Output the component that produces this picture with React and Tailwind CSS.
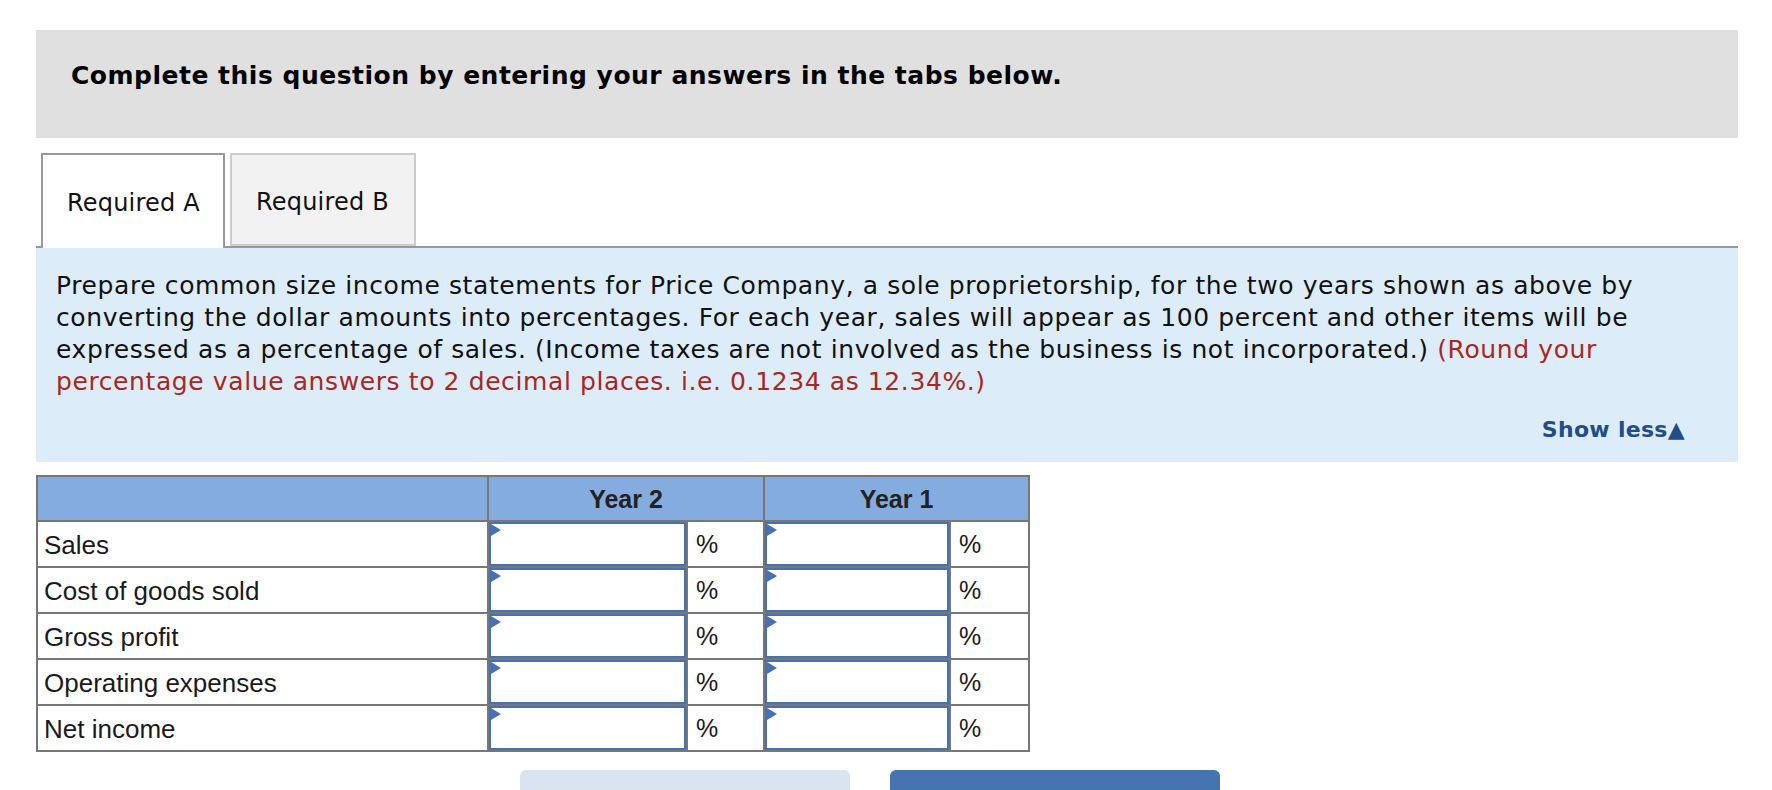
import React from "react";

const rows = [
  "Sales",
  "Cost of goods sold",
  "Gross profit",
  "Operating expenses",
  "Net income",
];

const AnswerInput = () => (
  <div className="relative h-full w-full bg-white border-2 border-[#4672b4]">
    <span className="absolute left-0 top-0 h-0 w-0 border-y-[6.5px] border-y-transparent border-l-[10px] border-l-[#4672b4]" />
    <input
      type="text"
      className="h-full w-full bg-transparent px-2 outline-none"
      style={{ fontFamily: "'Liberation Sans', Arial, sans-serif" }}
    />
  </div>
);

export default function App() {
  return (
    <div className="min-h-screen bg-white pt-[30px] px-[36px] w-[1774px]">
      <div className="w-[1702px]">
        {/* Instruction banner */}
        <div className="h-[108px] bg-[#e0e0e0] pl-[35px] pt-[31px] font-['DejaVu_Sans',Verdana,sans-serif]">
          <h2 className="text-[25px] leading-[30px] font-bold tracking-[0.5px] text-black">
            Complete this question by entering your answers in the tabs below.
          </h2>
        </div>

        {/* Tabs */}
        <div className="mt-[15px] flex items-end gap-[5px] pl-[5px] h-[95px] border-b-2 border-[#999999] font-['DejaVu_Sans',Verdana,sans-serif] text-[24px] tracking-[0.2px] text-[#111]">
          <div className="-mb-[2px] flex h-[95px] w-[184px] items-center border-2 border-b-0 border-[#999999] bg-white pl-[24px] pt-[3px]">
            Required A
          </div>
          <div className="flex h-[93px] w-[186px] items-center border-2 border-[#cccccc] bg-[#f2f2f2] pl-[24px] pt-[4px]">
            Required B
          </div>
        </div>

        {/* Question text */}
        <div className="h-[214px] bg-[#ddecf9] pl-[20px] pr-[53px] pt-[22px] font-['DejaVu_Sans',Verdana,sans-serif]">
          <p className="text-[25px] leading-[32px] tracking-[0.6px] text-[#111]">
            Prepare common size income statements for Price Company, a sole
            proprietorship, for the two years shown as above by converting the
            dollar amounts into percentages. For each year, sales will appear as
            100 percent and other items will be expressed as a percentage of
            sales. (Income taxes are not involved as the business is not
            incorporated.){" "}
            <span className="text-[#a8281f]">
              (Round your percentage value answers to 2 decimal places. i.e.
              0.1234 as 12.34%.)
            </span>
          </p>
          <div className="mt-[18px] text-right text-[22px] leading-[28px] font-bold tracking-[0.3px] text-[#214e8a]">
            Show less▲
          </div>
        </div>

        {/* Answer table */}
        <div className="mt-[13px] inline-grid grid-cols-[449px_197px_75px_184px_77px] gap-[2px] bg-[#777777] p-[2px] font-['Liberation_Sans',Arial,sans-serif] text-[26px] text-[#1a1a1a]">
          <div className="h-[43px] bg-[#84acdf]" />
          <div className="col-span-2 flex h-[43px] items-center justify-center bg-[#84acdf] pt-[2px] text-[25px] font-bold text-[#222]">
            Year 2
          </div>
          <div className="col-span-2 flex h-[43px] items-center justify-center bg-[#84acdf] pt-[2px] text-[25px] font-bold text-[#222]">
            Year 1
          </div>
          {rows.map((label) => (
            <React.Fragment key={label}>
              <div className="flex h-[44px] items-center bg-white pl-[6px] pt-[2px]">
                {label}
              </div>
              <div className="h-[44px]">
                <AnswerInput />
              </div>
              <div className="flex h-[44px] items-center bg-white pl-[8px] pt-[2px] text-[25px]">
                %
              </div>
              <div className="h-[44px]">
                <AnswerInput />
              </div>
              <div className="flex h-[44px] items-center bg-white pl-[8px] pt-[2px] text-[25px]">
                %
              </div>
            </React.Fragment>
          ))}
        </div>

        {/* Navigation buttons */}
        <div className="mt-[18px] flex gap-[40px] pl-[484px]">
          <div className="h-[40px] w-[330px] rounded-t-[6px] bg-[#dae4f0]" />
          <div className="h-[40px] w-[330px] rounded-t-[6px] bg-[#4674b1]" />
        </div>
      </div>
    </div>
  );
}
